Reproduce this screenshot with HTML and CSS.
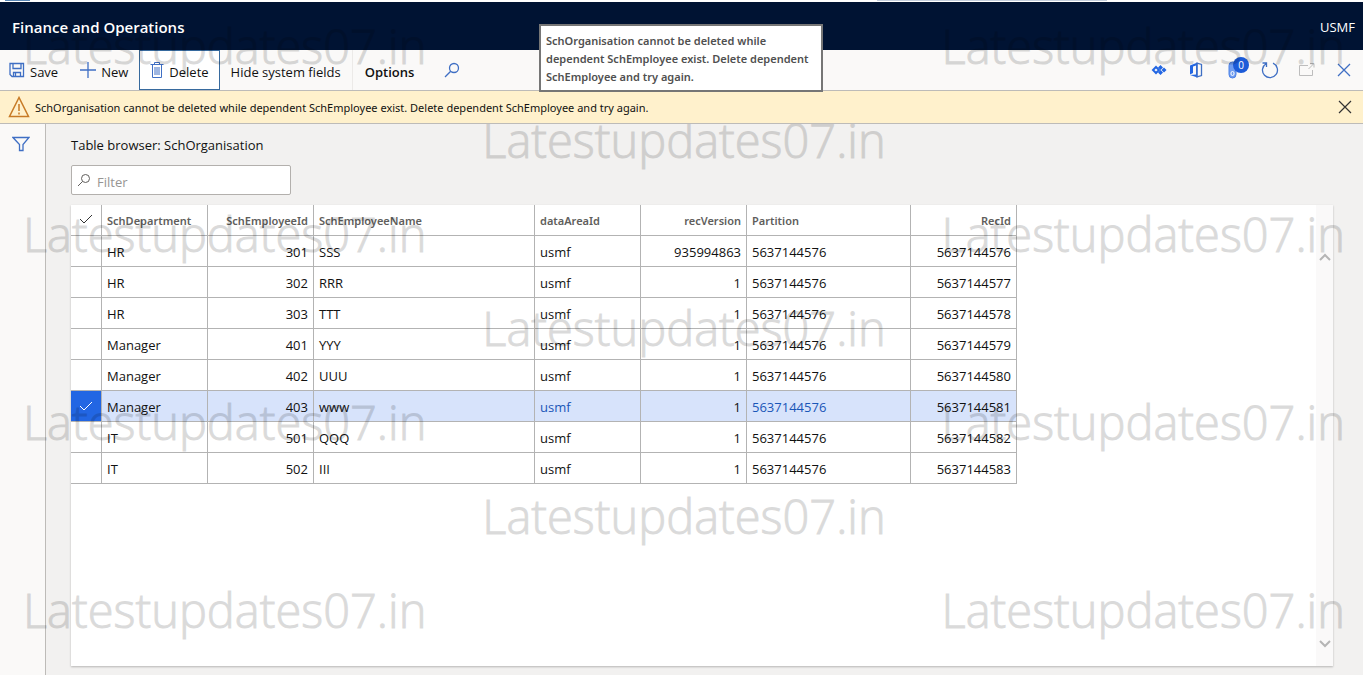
FILE: index.html
```html
<!DOCTYPE html>
<html lang="en">
<head>
    <meta charset="UTF-8">
    <meta name="viewport" content="width=device-width, initial-scale=1.0">
    <title>Finance and Operations</title>
    <link rel="stylesheet" href="styles.css">
</head>
<body>
    <div class="top-strip">
        <span class="strip-mark"></span>
        <span class="strip-line"></span>
    </div>

    <header class="top-bar">
        <h1>Finance and Operations</h1>
        <span class="company">USMF</span>
    </header>

    <div class="toolbar">
        <button class="tool save">
            <svg width="16" height="16" viewBox="0 0 16 16"><path class="medium" d="M1 1.500h13.500v13H3l-2-2zM4 1.500v5h8v-5M4.500 14.500v-4h7v4M6.500 11v3" /></svg>
            Save
        </button>
        <button class="tool">
            <svg width="16" height="16" viewBox="0 0 16 16"><path class="medium" d="M8 0v16M0 8h16" /></svg>
            New
        </button>
        <button class="tool delete">
            <svg width="14" height="18" viewBox="0 0 14 18"><path d="M0.500 3.500h13M4.500 3.500v-2h5v2M2.500 3.500v13h9v-13M5 6v8M7 6v8M9 6v8" /></svg>
            Delete
        </button>
        <button class="tool">Hide system fields</button>
        <button class="tool options">Options</button>
        <button class="tool search" aria-label="Search">
            <svg width="16" height="16" viewBox="0 0 16 16"><circle class="medium" cx="10" cy="6" r="4.500" /><path class="medium" d="M6.700 9.300L1 15" /></svg>
        </button>

        <div class="window-tools">
            <button class="icon-button" aria-label="Apps">
                <svg width="16" height="12" viewBox="0 0 16 12"><path class="thick" d="M5 3l3 3-3 3-3-3z" /><path class="solid" d="M9.500 1L12 3.500 9.500 6 7 3.500zM9.500 6L12 8.500 9.500 11 7 8.500zM13 3.500L15.500 6 13 8.500 10.500 6z" /></svg>
            </button>
            <button class="icon-button" aria-label="Open in Microsoft Office">
                <svg width="14" height="16" viewBox="0 0 14 16"><path class="solid" d="M8.500 0.500v15L1 13l6-0.500V3.500L4 4.500v6.500L1 12.500V3.500z" /><path class="medium" d="M8 1.200l4.500 1.300v11L8 14.800z" /></svg>
            </button>
            <button class="icon-button" aria-label="Attachments">
                <svg width="10" height="18" viewBox="0 0 10 18"><rect class="clip" x="1" y="1" width="7" height="16" rx="3.500" /><path d="M3 12v1a1.500 1.500 0 0 0 3 0v-1a1.500 1.500 0 0 0-3 0" stroke="#fff" /></svg>
                <span class="badge">0</span>
            </button>
            <button class="icon-button" aria-label="Refresh">
                <svg width="18" height="18" viewBox="0 0 18 18"><path class="medium" d="M12 2.200a7.500 7.500 0 1 1-7 0.500M1.500 2h4v4" /></svg>
            </button>
            <button class="icon-button" aria-label="Open in new window" disabled>
                <svg width="16" height="14" viewBox="0 0 16 14"><path d="M9 2.500H0.500v10h13V7M9.500 6l5-5M11 0.500h4v4" stroke="#bdbdbd" /></svg>
            </button>
            <button class="icon-button" aria-label="Close">
                <svg width="14" height="14" viewBox="0 0 14 14"><path class="medium" d="M1 1l12 12M13 1L1 13" /></svg>
            </button>
        </div>
    </div>

    <div class="message-bar">
        <svg width="22" height="22" viewBox="0 0 22 22"><path d="M11 1.500L1.500 20.500h19z" /><path d="M11 8v7M11 16.500v2" /></svg>
        <span>SchOrganisation cannot be deleted while dependent SchEmployee exist. Delete dependent SchEmployee and try again.</span>
        <button class="icon-button" aria-label="Dismiss message">
            <svg width="14" height="14" viewBox="0 0 14 14"><path class="dismiss" d="M1 1l12 12M13 1L1 13" /></svg>
        </button>
    </div>

    <div class="content">
        <aside class="side-panel">
            <button class="filter-button" aria-label="Show filters">
                <svg width="18" height="16" viewBox="0 0 18 16"><path class="medium" d="M1 1.500h16L11 8.500v6H7.500v-6z" /></svg>
            </button>
        </aside>

        <main>
            <h2>Table browser: SchOrganisation</h2>
            <label class="filter-box">
                <svg width="14" height="14" viewBox="0 0 14 14"><circle cx="8.500" cy="5.500" r="4" /><path d="M5.500 8.500L1 13" /></svg>
                <input type="text" placeholder="Filter" aria-label="Filter">
            </label>

            <div class="grid-panel">
                <div class="grid-scroll">
                    <table>
                        <colgroup>
                            <col class="col-check">
                            <col class="col-small">
                            <col class="col-small">
                            <col class="col-name">
                            <col class="col-small">
                            <col class="col-small">
                            <col class="col-partition">
                            <col class="col-small">
                        </colgroup>
                        <thead>
                            <tr>
                                <th class="check"><svg width="14" height="10" viewBox="0 0 14 10"><path d="M1 5l4 4 8-8" /></svg></th>
                                <th>SchDepartment</th>
                                <th class="num">SchEmployeeId</th>
                                <th>SchEmployeeName</th>
                                <th>dataAreaId</th>
                                <th class="num">recVersion</th>
                                <th>Partition</th>
                                <th class="num">RecId</th>
                            </tr>
                        </thead>
                        <tbody>
                            <tr><td></td><td>HR</td><td class="num">301</td><td>SSS</td><td>usmf</td><td class="num">935994863</td><td>5637144576</td><td class="num">5637144576</td></tr>
                            <tr><td></td><td>HR</td><td class="num">302</td><td>RRR</td><td>usmf</td><td class="num">1</td><td>5637144576</td><td class="num">5637144577</td></tr>
                            <tr><td></td><td>HR</td><td class="num">303</td><td>TTT</td><td>usmf</td><td class="num">1</td><td>5637144576</td><td class="num">5637144578</td></tr>
                            <tr><td></td><td>Manager</td><td class="num">401</td><td>YYY</td><td>usmf</td><td class="num">1</td><td>5637144576</td><td class="num">5637144579</td></tr>
                            <tr><td></td><td>Manager</td><td class="num">402</td><td>UUU</td><td>usmf</td><td class="num">1</td><td>5637144576</td><td class="num">5637144580</td></tr>
                            <tr class="selected"><td class="check"><svg width="14" height="10" viewBox="0 0 14 10"><path d="M1 5l4 4 8-8" /></svg></td><td>Manager</td><td class="num">403</td><td>www</td><td class="link">usmf</td><td class="num">1</td><td class="link">5637144576</td><td class="num">5637144581</td></tr>
                            <tr><td></td><td>IT</td><td class="num">501</td><td>QQQ</td><td>usmf</td><td class="num">1</td><td>5637144576</td><td class="num">5637144582</td></tr>
                            <tr><td></td><td>IT</td><td class="num">502</td><td>III</td><td>usmf</td><td class="num">1</td><td>5637144576</td><td class="num">5637144583</td></tr>
                        </tbody>
                    </table>
                </div>
                <div class="scrollbar">
                    <svg width="12" height="8" viewBox="0 0 12 8"><path d="M1 7l5-5 5 5" /></svg>
                    <svg width="12" height="8" viewBox="0 0 12 8"><path d="M1 1l5 5 5-5" /></svg>
                </div>
            </div>
        </main>
    </div>

    <div class="tooltip" role="tooltip">
        SchOrganisation cannot be deleted while<br>
        dependent SchEmployee exist. Delete dependent<br>
        SchEmployee and try again.
    </div>

    <!-- Site watermark over the whole page -->
    <div class="watermark" aria-hidden="true">
        <div class="mark-row"><span>Latestupdates07.in</span><span>Latestupdates07.in</span></div>
        <div class="mark-row middle"><span>Latestupdates07.in</span></div>
        <div class="mark-row"><span>Latestupdates07.in</span><span>Latestupdates07.in</span></div>
        <div class="mark-row middle"><span>Latestupdates07.in</span></div>
        <div class="mark-row"><span>Latestupdates07.in</span><span>Latestupdates07.in</span></div>
        <div class="mark-row middle"><span>Latestupdates07.in</span></div>
        <div class="mark-row"><span>Latestupdates07.in</span><span>Latestupdates07.in</span></div>
    </div>
</body>
</html>
```

FILE: styles.css
```css
* {
    box-sizing: border-box;
}

body {
    margin: 0;
    min-height: 100vh;
    display: flex;
    flex-direction: column;
    position: relative;
    background-color: #f2f1f0;
    color: #111111;
    font-family: "Open Sans", "Noto Sans", sans-serif;
    font-size: 13px;
}

button {
    font: inherit;
    color: inherit;
    background: none;
    border: none;
    padding: 0;
    cursor: pointer;
}

svg {
    fill: none;
    stroke: #3f6fc4;
    flex-shrink: 0;
}

svg .solid {
    fill: #2266e3;
    stroke: none;
}

svg .medium {
    stroke-width: 1.3;
}

svg .thick {
    stroke: #2266e3;
    stroke-width: 2;
}

svg .clip {
    fill: #6f9cf0;
    stroke: #4d82e6;
}

svg .dismiss {
    stroke: #333333;
    stroke-width: 1.2;
}

/* Header */
.top-strip {
    height: 2px;
    display: flex;
    justify-content: space-between;
    padding: 0 256px 0 5px;
    background-color: white;
}

.strip-mark {
    width: 25px;
    height: 1px;
    background-color: #5a87b5;
}

.strip-line {
    width: 230px;
    height: 1px;
    background-color: #c5cfdd;
}

.top-bar {
    height: 48px;
    display: flex;
    align-items: center;
    justify-content: space-between;
    padding: 2px 8px 0 12px;
    background-color: #001333;
    color: white;
}

.top-bar h1 {
    margin: 0;
    font-size: 15px;
    font-weight: 600;
}

/* Toolbar */
.toolbar {
    height: 41px;
    display: flex;
    background-color: #faf9f8;
    border-bottom: 1px solid #bdbbb8;
}

.tool {
    display: flex;
    align-items: center;
    gap: 5px;
    padding: 3px 11px 0;
    white-space: nowrap;
}

.tool svg {
    margin-bottom: 4px;
}

.save {
    padding-left: 9px;
}

.delete {
    padding: 3px 10px 0;
    background-color: white;
    border: 1px solid #376a9e;
}

.options {
    padding: 3px 12px 0;
    font-weight: 600;
    border-left: 1px solid #eceae8;
}

.search {
    padding-left: 18px;
}

.window-tools {
    display: flex;
    margin: 0 1px 0 auto;
}

.icon-button {
    width: 37px;
    display: flex;
    align-items: center;
    justify-content: center;
    position: relative;
}

.badge {
    position: absolute;
    top: 7px;
    left: 19px;
    width: 16px;
    height: 16px;
    border-radius: 50%;
    background-color: #1c5bd8;
    color: white;
    font-size: 10px;
    line-height: 16px;
    text-align: center;
}

/* Warning message */
.message-bar {
    height: 33px;
    display: flex;
    align-items: center;
    gap: 5px;
    padding-left: 8px;
    position: relative;
    z-index: 2;
    background-color: #fff1cc;
    border-bottom: 1px solid #bdbbb8;
    font-family: "Noto Sans", "Open Sans", sans-serif;
    font-size: 11px;
    white-space: nowrap;
}

.message-bar svg {
    stroke: #c77a25;
    stroke-width: 1.5;
}

.message-bar .icon-button {
    margin-left: auto;
}

.tooltip {
    position: absolute;
    top: 24px;
    left: 539px;
    z-index: 3;
    width: 284px;
    padding: 6px 5px 4px;
    border: 2px solid #767676;
    background-color: white;
    color: #505050;
    font-family: "Noto Sans", "Open Sans", sans-serif;
    font-size: 11px;
    font-weight: 600;
    line-height: 18px;
    white-space: nowrap;
}

/* Page content */
.content {
    flex: 1;
    display: flex;
}

.side-panel {
    width: 46px;
    background-color: #faf9f8;
    border-right: 1px solid #bdbbb8;
}

.filter-button {
    display: block;
    margin: 12px 0 0 12px;
}

main {
    flex: 1;
    min-width: 0;
    display: flex;
    flex-direction: column;
    padding: 11px 30px 9px 25px;
}

h2 {
    margin: 0 0 10px;
    font-size: 13px;
    font-weight: 400;
    line-height: 20px;
}

.filter-box {
    width: 220px;
    height: 30px;
    display: flex;
    align-items: center;
    gap: 6px;
    padding: 0 5px;
    background-color: white;
    border: 1px solid #b3b0ad;
    border-radius: 2px;
}

.filter-box svg {
    stroke: #605e5c;
}

.filter-box input {
    width: 100%;
    border: none;
    outline: none;
    padding: 3px 0 0;
    background: none;
    font: inherit;
}

.filter-box input::placeholder {
    color: #979593;
}

.grid-panel {
    flex: 1;
    display: flex;
    margin-top: 10px;
    background-color: white;
    box-shadow: 0 1px 2px rgba(0, 0, 0, 0.25);
}

.grid-scroll {
    flex: 1;
    min-width: 0;
}

table {
    table-layout: fixed;
    width: 946px;
    border-collapse: separate;
    border-spacing: 0;
}

.col-check {
    width: 31px;
}

.col-small {
    width: 106px;
}

.col-name {
    width: 221px;
}

.col-partition {
    width: 164px;
}

th,
td {
    height: 31px;
    padding: 1px 5px 0;
    border-right: 1px solid #b3b3b3;
    border-bottom: 1px solid #b3b3b3;
    text-align: left;
    line-height: 20px;
}

th {
    color: #605e5c;
    font-family: "Noto Sans", "Open Sans", sans-serif;
    font-size: 11px;
    font-weight: 600;
}

.num {
    text-align: right;
}

.check {
    padding: 0;
    text-align: center;
}

.check svg {
    stroke: #333333;
}

.selected td {
    background-color: #d7e3fb;
}

.selected .check {
    background-color: #2266e3;
}

.selected svg {
    stroke: white;
}

.selected .link {
    color: #1a56b8;
}

.scrollbar {
    width: 17px;
    display: flex;
    flex-direction: column;
    align-items: center;
    justify-content: space-between;
    padding: 48px 0 18px;
    background-color: #faf9f9;
}

.scrollbar svg {
    stroke: #b5b5b5;
    stroke-width: 2;
}

/* Watermark */
.watermark {
    position: absolute;
    top: -1px;
    left: 0;
    right: 0;
    bottom: 0;
    z-index: 1;
    overflow: hidden;
    pointer-events: none;
    opacity: 0.14;
    color: black;
    -webkit-text-stroke: 1px black;
    font-size: 47px;
    font-weight: 300;
    line-height: 94px;
    white-space: nowrap;
}

.mark-row {
    display: flex;
    justify-content: space-between;
    padding: 0 18px 0 23px;
}

.middle {
    justify-content: center;
}
```
